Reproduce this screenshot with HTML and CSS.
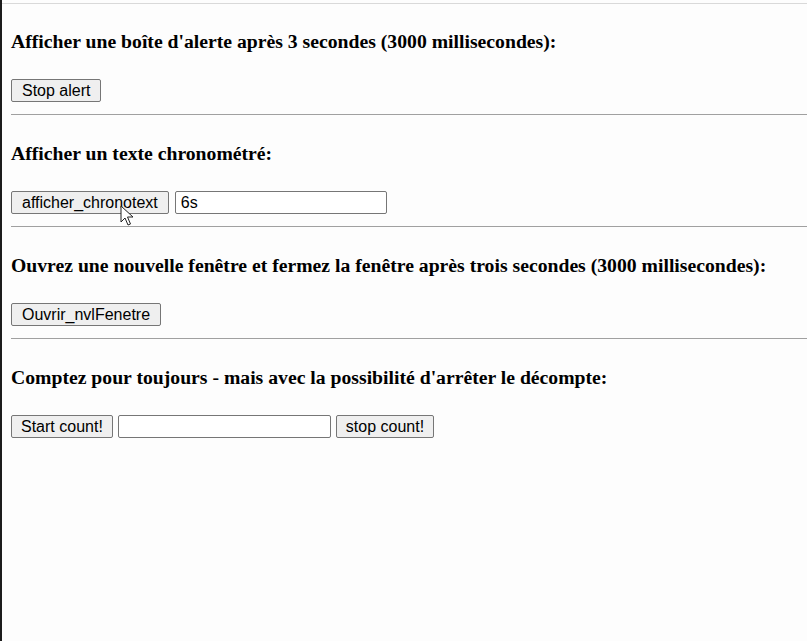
FILE: index.html
```html
<!DOCTYPE html>
<html lang="fr">
<head>
<meta charset="utf-8">
<title>Timing</title>
<link rel="stylesheet" href="styles.css">
</head>
<body>
<div class="frame">
  <div class="topline"></div>
  <section class="sec first">
    <h3>Afficher une boîte d'alerte après 3 secondes (3000 millisecondes):</h3>
    <div class="controls">
      <button class="btn">Stop alert</button>
    </div>
    <hr>
  </section>
  <section class="sec">
    <h3>Afficher un texte chronométré:</h3>
    <div class="controls">
      <button class="btn">afficher_chronotext</button>
      <input class="field" type="text" value="6s">
    </div>
    <hr>
  </section>
  <section class="sec">
    <h3>Ouvrez une nouvelle fenêtre et fermez la fenêtre après trois secondes (3000 millisecondes):</h3>
    <div class="controls">
      <button class="btn">Ouvrir_nvlFenetre</button>
    </div>
    <hr>
  </section>
  <section class="sec">
    <h3>Comptez pour toujours - mais avec la possibilité d'arrêter le décompte:</h3>
    <div class="controls">
      <button class="btn btn-tight">Start count!</button>
      <input class="field field-count" type="text" value="">
      <button class="btn btn-tight">stop count!</button>
    </div>
  </section>
  <svg class="cursor" width="14" height="22" viewBox="0 0 14 22">
    <path d="M1 1 L1 17 L5 13 L8 20 L10.5 19 L7.5 12 L13 12 Z" fill="#fff" stroke="#222" stroke-width="1" stroke-linejoin="round"/>
  </svg>
</div>
</body>
</html>
```
FILE: styles.css
```css
html, body {
  margin: 0;
  padding: 0;
  background: #fdfdfd;
}
.frame {
  position: relative;
  box-sizing: border-box;
  height: 641px;
  border-left: 2px solid #1c1c1c;
  overflow: hidden;
}
.topline {
  margin-top: 3px;
  height: 1px;
  background: #d9d9d9;
}
.sec {
  padding: 26px 0 0 9px;
}
.sec h3 {
  margin: 0;
  font-family: "Liberation Serif", "Times New Roman", serif;
  font-size: 19.7px;
  font-weight: bold;
  line-height: 22px;
  color: #000;
}
.controls {
  margin-top: 27px;
  display: flex;
  gap: 5px;
  align-items: stretch;
}
.btn {
  box-sizing: border-box;
  height: 23px;
  margin: 0;
  padding: 1px 10px;
  font-family: "Liberation Sans", Arial, sans-serif;
  font-size: 16px;
  line-height: 19px;
  color: #000;
  background: #efefef;
  border: 1px solid #767676;
  border-radius: 2px;
}
.btn-tight {
  padding: 1px 9px;
}
.field {
  box-sizing: border-box;
  width: 212px;
  height: 23px;
  margin: 0 0 0 1px;
  padding: 1px 5px;
  font-family: "Liberation Sans", Arial, sans-serif;
  font-size: 16px;
  color: #000;
  background: #fff;
  border: 1px solid #767676;
  border-radius: 2px;
}
.field-count {
  width: 213px;
  margin: 0;
}
.sec hr {
  margin: 12px 0 1px;
  border: 0;
  border-top: 1px solid #a0a0a0;
  height: 0;
}
.cursor {
  position: absolute;
  left: 118px;
  top: 205px;
}
```
